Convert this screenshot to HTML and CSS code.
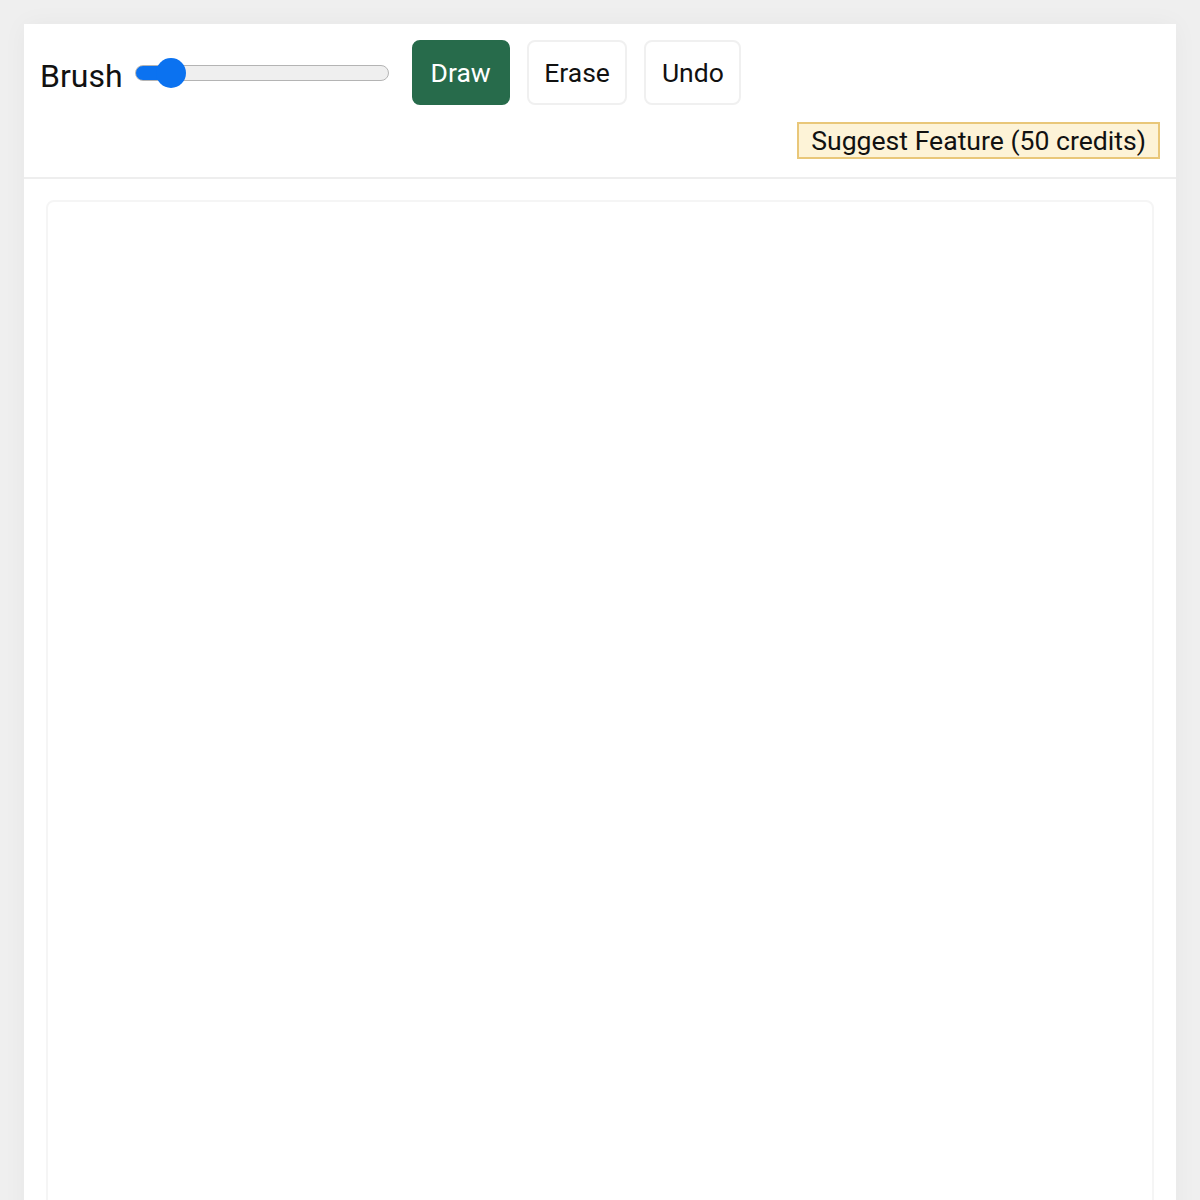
FILE: index.html
```html
<!DOCTYPE html>
<html lang="en">
<head>
    <meta charset="UTF-8">
    <meta name="viewport" content="width=device-width, initial-scale=1.0">
    <title>Sketch Pad</title>
    <link rel="stylesheet" href="styles.css">
</head>
<body>

<div class="app">
    <!-- Панель инструментов -->
    <div class="toolbar">
        <label class="brush">
            <span>Brush</span>
            <input type="range" class="brush-size" min="1" max="100" value="10">
        </label>
        <button class="tool active">Draw</button>
        <button class="tool">Erase</button>
        <button class="tool">Undo</button>
        <div class="extras">
            <button class="suggest">Suggest Feature (50 credits)</button>
        </div>
    </div>

    <!-- Холст для рисования -->
    <div class="board">
        <canvas class="pad" width="1104" height="1100"></canvas>
    </div>
</div>

</body>
</html>
```

FILE: styles.css
```css
* {
    margin: 0;
    padding: 0;
    box-sizing: border-box;
}

body {
    background: #efefef;
    font-family: Roboto, 'Noto Sans', sans-serif;
    color: #111;
    padding: 24px;
    overflow: hidden;
}

.app {
    background: #fff;
    box-shadow: 0 0 24px rgba(0, 0, 0, 0.04);
}

/* Панель инструментов */
.toolbar {
    display: flex;
    flex-wrap: wrap;
    align-items: center;
    gap: 17px;
    padding: 16px 16px 18px 16px;
    border-bottom: 2px solid #eee;
}

.brush {
    display: flex;
    align-items: center;
    gap: 12px;
    font-size: 32px;
    margin-right: 6px;
}

.brush span {
    padding-top: 6px;
}

.brush-size {
    -webkit-appearance: none;
    appearance: none;
    width: 254px;
    height: 16px;
    border: 1px solid #b4b4b4;
    border-radius: 8px;
    background: linear-gradient(to right, #0b72f0 0 14%, #efefef 14%);
    outline: none;
}

.brush-size::-webkit-slider-thumb {
    -webkit-appearance: none;
    appearance: none;
    width: 30px;
    height: 30px;
    border-radius: 50%;
    background: #0b72f0;
    border: none;
}

.tool {
    font-family: inherit;
    font-size: 26.5px;
    color: #111;
    background: #fff;
    border: 2px solid #f0f0f0;
    border-radius: 8px;
    height: 65px;
    padding: 0 15.5px;
    cursor: pointer;
}

.tool.active {
    background: #276b4b;
    border-color: #276b4b;
    color: #fff;
    padding: 0 17px;
}

/* Вторая строка панели */
.extras {
    width: 100%;
    display: flex;
    justify-content: flex-end;
}

.suggest {
    font-family: inherit;
    font-size: 26.6px;
    color: #111;
    background: #fdf3d7;
    border: 2px solid #e9c779;
    padding: 1px 12px;
    cursor: pointer;
}

/* Холст */
.board {
    padding: 21px 22px 0;
}

.pad {
    display: block;
    width: 100%;
    height: 1100px;
    background: #fff;
    border: 2px solid #f5f5f5;
    border-radius: 8px;
}
```
